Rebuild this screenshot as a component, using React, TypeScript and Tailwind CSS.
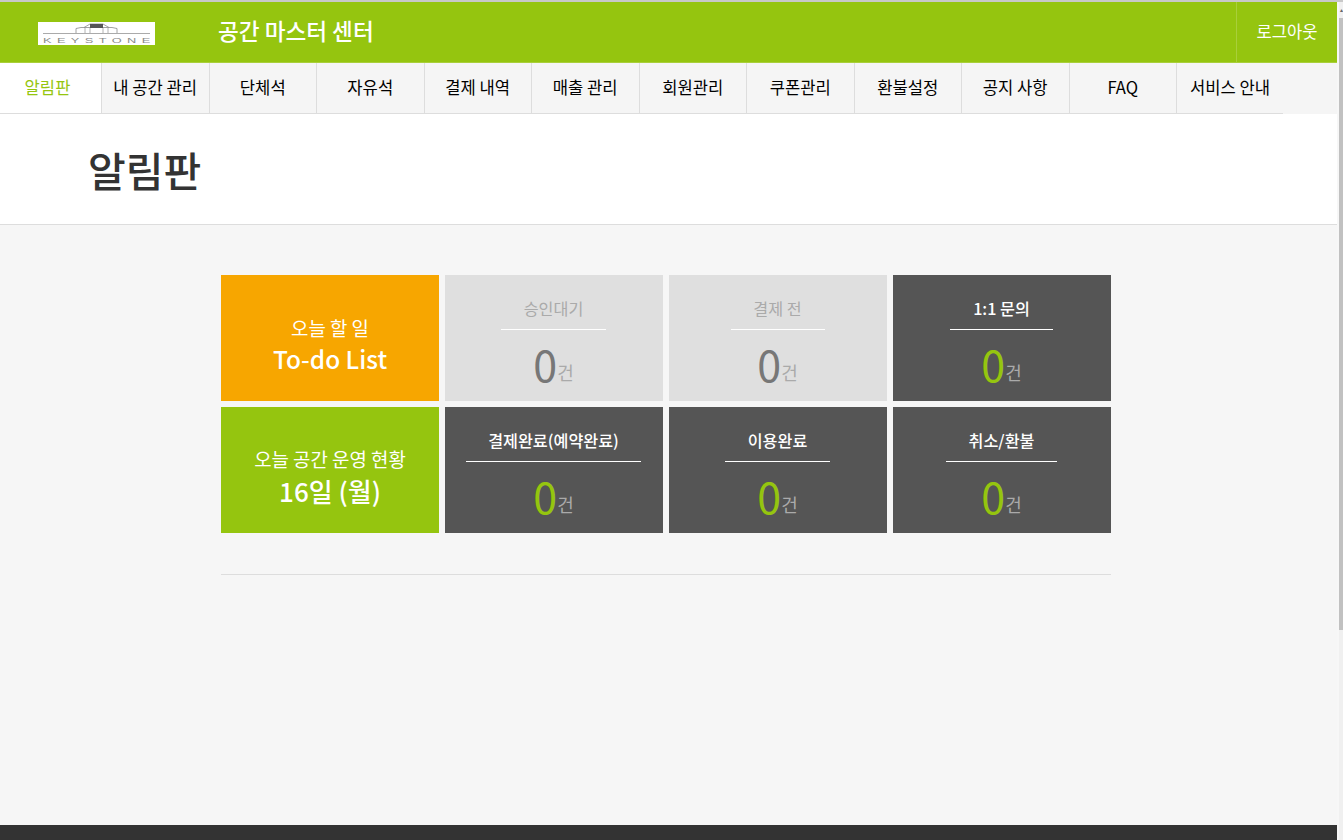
const menus = ["내 공간 관리", "단체석", "자유석", "결제 내역", "매출 관리", "회원관리", "쿠폰관리", "환불설정", "공지 사항", "FAQ"];

const font = "font-['Noto_Sans_CJK_KR','Noto_Sans',sans-serif]";

function Logo() {
  return (
    <svg width="117" height="23" viewBox="0 0 117 23" fill="none" className="block bg-white">
      <path d="M38 11V6.5L43 5.5H74L79 6.5V11" stroke="#8a8a8a" strokeWidth="0.8" />
      <path d="M46 5.5L52 2H65L71 5.5" stroke="#8a8a8a" strokeWidth="0.8" />
      <path d="M47 11V6M52 11V6M65 11V6M70 11V6" stroke="#a0a0a0" strokeWidth="0.8" />
      <rect x="52" y="2" width="13" height="4" fill="#555555" />
      <line x1="5" y1="11.5" x2="112" y2="11.5" stroke="#aaaaaa" strokeWidth="1" />
      <g transform="translate(5 0) scale(1.6 1)">
        <text x="0" y="21" textLength="67" lengthAdjust="spacing" fontFamily="Liberation Sans, sans-serif" fontSize="8" fill="#8a8a8a">KEYSTONE</text>
      </g>
    </svg>
  );
}

function StatCard({ title, light, lineWidth }: { title: string; light?: boolean; lineWidth: string }) {
  return (
    <div className={`flex flex-col items-center pt-[21px] pr-px ${light ? "bg-[#dfdfdf]" : "bg-[#555555]"}`}>
      <div className={`h-[24px] leading-[24px] text-[16.2px] ${light ? "text-[#aaaaaa]" : "text-white font-medium"}`}>{title}</div>
      <div className={`h-px mt-[9px] bg-white ${lineWidth}`} />
      <div className="mt-[5px] flex items-end h-[56px]">
        <span className={`text-[43px] leading-[56px] ${light ? "text-[#777777]" : "text-[#95c50f]"}`}>0</span>
        <span className="text-[18px] leading-[24px] mb-[7px] text-[#aaaaaa]">건</span>
      </div>
    </div>
  );
}

export default function App() {
  return (
    <div className={`${font} h-[840px] overflow-hidden flex flex-col bg-[#f6f6f6]`}>
      <div className="h-[2px] bg-[#c8c8c8] shrink-0" />
      <div className="flex flex-1 min-h-0">
        <div className="w-[1337px] shrink-0 flex flex-col">
          <header className="h-[61px] bg-[#95c50f] flex items-center border-b border-[#a9cf3a]">
            <div className="ml-[38px] mt-[2px]">
              <Logo />
            </div>
            <h1 className="ml-[63px] mb-[2px] text-[22.6px] leading-[30px] font-medium text-white">공간 마스터 센터</h1>
            <button className="ml-auto w-[101px] h-full pb-[2px] border-l border-[#a9cf3a] text-[16.6px] text-white">로그아웃</button>
          </header>

          <nav className="h-[51px] flex bg-[#f5f5f5]">
            <div className="w-[1283px] flex border-b border-[#dddddd]">
              <a className="w-[102px] bg-white border-r border-[#dddddd] text-[#95c50f] text-[16.6px] leading-[49px] text-center pr-[6px]">알림판</a>
              {menus.map((m) => (
                <a key={m} className="w-[107.5px] border-r border-[#dddddd] text-black text-[16.6px] leading-[49px] text-center whitespace-nowrap">
                  {m}
                </a>
              ))}
              <a className="flex-1 text-black text-[16.6px] leading-[49px] text-center whitespace-nowrap">서비스 안내</a>
            </div>
            <div className="flex-1" />
          </nav>

          <div className="h-[111px] bg-white border-b border-[#dddddd] pl-[88px] flex items-center shrink-0">
            <h2 className="text-[41px] leading-[56px] font-medium text-[#333333] mb-px">알림판</h2>
          </div>

          <main className="flex-1 pt-[50px] pl-[221px] pr-[226px]">
            <div className="grid grid-cols-[218px_218px_218px_218px] grid-rows-[126px_126px] gap-[6px]">
              <div className="bg-[#f7a600] text-white flex flex-col items-center justify-center pt-[16px]">
                <div className="text-[18.9px] leading-[24px]">오늘 할 일</div>
                <div className="mt-px text-[24.4px] leading-[36px] font-medium">To-do List</div>
              </div>
              <StatCard title="승인대기" light lineWidth="w-[105px]" />
              <StatCard title="결제 전" light lineWidth="w-[94px]" />
              <StatCard title="1:1 문의" lineWidth="w-[103px]" />
              <div className="bg-[#95c50f] text-white flex flex-col items-center justify-center pt-[15px]">
                <div className="text-[18.9px] leading-[24px]">오늘 공간 운영 현황</div>
                <div className="mt-[2px] text-[26px] leading-[36px] font-medium">16일 (월)</div>
              </div>
              <StatCard title="결제완료(예약완료)" lineWidth="w-[175px]" />
              <StatCard title="이용완료" lineWidth="w-[105px]" />
              <StatCard title="취소/환불" lineWidth="w-[111px]" />
            </div>
            <div className="mt-[41px] w-[890px] h-px bg-[#dddddd]" />
          </main>

          <footer className="h-[15px] bg-[#333333] shrink-0" />
        </div>

        <div className="flex-1 bg-[#f7f7f7] flex justify-end">
          <div className="w-[4px] bg-[#f0f0f0] flex flex-col">
            <div className="h-[16px] flex items-center justify-center text-[#666666] text-[6px] leading-none">▴</div>
            <div className="h-[612px] bg-[#c1c1c1]" />
          </div>
        </div>
      </div>
    </div>
  );
}
